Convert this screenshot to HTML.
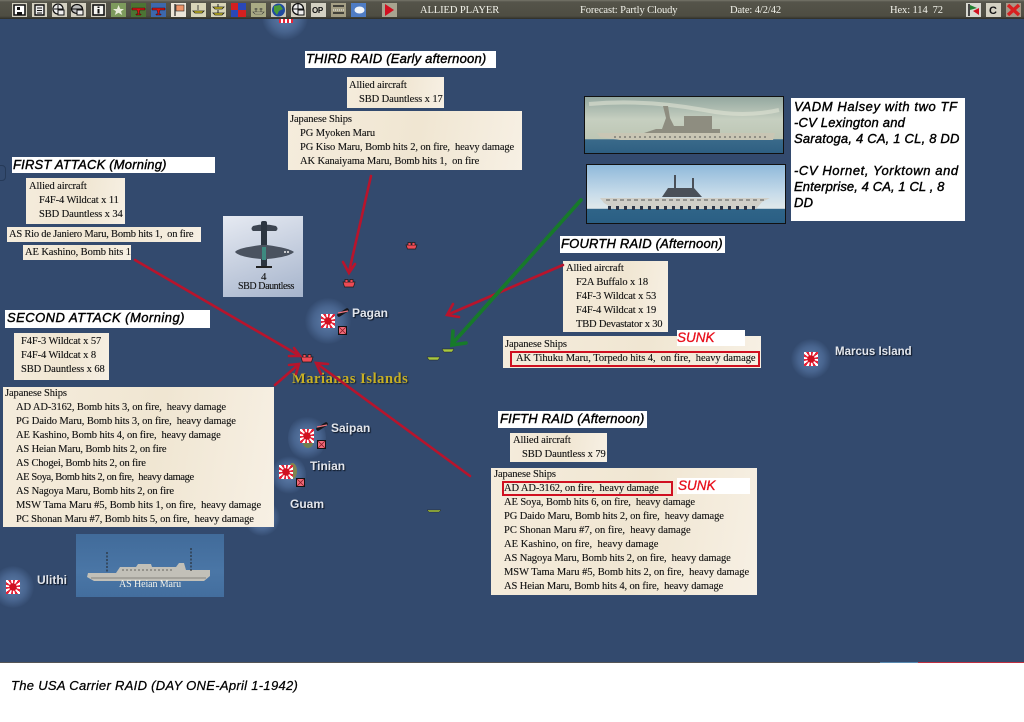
<!DOCTYPE html>
<html><head><meta charset="utf-8"><style>
html,body{margin:0;padding:0;background:#fff}
#r{position:relative;width:1024px;height:722px;overflow:hidden;background:#fff;font-family:"Liberation Serif",serif}
#map{position:absolute;left:0;top:19px;width:1024px;height:643px;background:#334a6e}
#bar{position:absolute;left:0;top:0;width:1024px;height:19px;background:linear-gradient(180deg,#77766a 0,#55544a 2px,#4e4d42 16px,#2e2e28 19px)}
.b{position:absolute;background:#fff}
.p{position:absolute;background:linear-gradient(100deg,#f5ecdc,#f0e6d2 55%,#f7f0e4)}
.t{position:absolute;font:10.5px/12px "Liberation Serif",serif;color:#111;white-space:nowrap;letter-spacing:-.1px;margin-top:1px;-webkit-text-stroke:.12px #111}
.w{color:#f2f2ea;-webkit-text-stroke:0}
.h{position:absolute;font:italic 13px/16px "Liberation Sans",sans-serif;-webkit-text-stroke:.4px #000;color:#000;white-space:nowrap;letter-spacing:.2px}
.l{position:absolute;font:bold 12px/14px "Liberation Sans",sans-serif;color:#e3e6ec;text-shadow:1px 1px 1px #0d1522;white-space:nowrap}
.sun{position:absolute;width:14px;height:14px;background:radial-gradient(circle,#d01020 0 3.5px,transparent 4px),repeating-conic-gradient(#e8243a 0 18deg,#fff 18deg 36deg)}
.g{position:absolute;border-radius:50%;background:radial-gradient(circle,#5f7fac 0,#48648e 45%,rgba(51,74,110,0) 72%)}
.red{position:absolute;border:2px solid #d01020;box-sizing:border-box}
.s{position:absolute;font:italic 13.5px/16px "Liberation Sans",sans-serif;color:#e8101c;white-space:nowrap;-webkit-text-stroke:.3px #e8101c}
</style></head><body><div id="r">
<div id="map"></div>
<div class="g" style="left:262px;top:-6px;width:46px;height:46px"></div>
<div id="bar"></div>
<svg width="1024" height="19" style="position:absolute;left:0;top:0">
<g fill="#d4d1c2"><rect x="12" y="3" width="15" height="14"/><rect x="32" y="3" width="15" height="14"/><rect x="52" y="3" width="15" height="14"/><rect x="71" y="3" width="15" height="14"/><rect x="91" y="3" width="15" height="14"/><rect x="311" y="3" width="15" height="14"/><rect x="291" y="3" width="15" height="14"/></g>
<path d="M14 5H25V15H14Z" fill="#fff" stroke="#111" stroke-width="1.6"/><path d="M17 12H22V15H17Z" fill="#111"/><rect x="17" y="7" width="3" height="3" fill="#111"/>
<path d="M35 5H44V15H35Z" fill="#eee" stroke="#111" stroke-width="1.4"/><path d="M37 8H42M37 10.5H42M37 13H42" stroke="#111"/>
<circle cx="58" cy="9" r="5" fill="#eee" stroke="#111" stroke-width="1.3"/><path d="M54 9H63M58 5V13" stroke="#111"/><rect x="58" y="10" width="6" height="5" fill="#eee" stroke="#111"/>
<ellipse cx="77" cy="9" rx="5.5" ry="4.5" fill="#bbb" stroke="#111" stroke-width="1.3"/><path d="M72 9H83" stroke="#111"/><rect x="77" y="10" width="6" height="5" fill="#eee" stroke="#111"/>
<rect x="93" y="5" width="11" height="10" fill="#f4f4f0" stroke="#111" stroke-width="1.6"/><path d="M98.5 6.5V8M98.5 9V13.5" stroke="#111" stroke-width="2"/>
<rect x="111" y="3" width="15" height="14" fill="#7d9a5c"/><path d="M118.5 5L120.3 9H124L121 11.4L122.2 15L118.5 12.8L114.8 15L116 11.4L113 9H117Z" fill="#e8ecd8"/>
<rect x="131" y="3" width="15" height="14" fill="#4c7434"/><path d="M132 8H145L145 10H140L139 14H141V15H136V14H138L137 10H132Z" fill="#d41414" stroke="#200" stroke-width=".4"/>
<rect x="151" y="3" width="15" height="14" fill="#3d68ac"/><path d="M152 8H165L165 10H160L159 14H161V15H156V14H158L157 10H152Z" fill="#d41414" stroke="#200" stroke-width=".4"/>
<rect x="171" y="3" width="15" height="14" fill="#ece6d8"/><path d="M175 4V16" stroke="#222" stroke-width="1.2"/><rect x="176" y="5" width="8" height="6" fill="#ee9468" stroke="#222" stroke-width=".6"/>
<rect x="191" y="3" width="15" height="14" fill="#d8d5b8"/><path d="M198 5V10M193 11H204L202 13H195Z" fill="#e6d420" stroke="#222" stroke-width=".8"/>
<rect x="211" y="3" width="15" height="14" fill="#d8d5b8"/><path d="M213 7H224L222 9H215ZM213 13H224L222 15H215Z" fill="#e6d420" stroke="#222" stroke-width=".8"/><path d="M218 4V7M218 10V13" stroke="#222"/>
<rect x="231" y="3" width="15" height="14" fill="#2a48b8"/><rect x="231" y="3" width="7" height="7" fill="#d42020"/><rect x="238" y="10" width="8" height="7" fill="#d42020"/>
<rect x="251" y="3" width="15" height="14" fill="#a9aa84"/><path d="M253 12H264L262 14H255Z" fill="#c8c8a0" stroke="#333" stroke-width=".6"/><path d="M256 8V12M261 8V12M254.500 9H257.500M259.500 9H262.500" stroke="#333" stroke-width=".7"/>
<rect x="271" y="3" width="15" height="14" fill="#c8c6b8"/><circle cx="278.500" cy="10" r="6.500" fill="#1f4aa0"/><path d="M274 6L280 5L283 9L279 11L277 15L274 11Z" fill="#4a9a38"/>
<circle cx="298" cy="9" r="5.500" fill="#eee" stroke="#111" stroke-width="1.3"/><path d="M292.500 9H303.500M298 3.500V14.500" stroke="#111"/><rect x="298" y="10" width="6" height="5" fill="#eee" stroke="#111"/>
<rect x="331" y="3" width="15" height="14" fill="#a49e84"/><path d="M333 6H344M333 13H344" stroke="#222" stroke-width="1.6"/><path d="M333 10H344" stroke="#eee" stroke-dasharray="1 1"/>
<rect x="351" y="3" width="15" height="14" fill="#4f7cc4"/><ellipse cx="359.500" cy="10" rx="5" ry="3.500" fill="#f0f4fa"/>
<rect x="382" y="3" width="15" height="14" fill="#a8a490"/><path d="M385 4L394 10L385 16Z" fill="#d01020"/>
<rect x="966" y="3" width="15" height="14" fill="#d8d8d0"/><path d="M969 4V16" stroke="#222" stroke-width="1.6"/><path d="M970 5L977 8L970 10Z" fill="#208030"/><path d="M979 8L973 11L979 15Z" fill="#d01020"/>
<rect x="986" y="3" width="15" height="14" fill="#d4d1c2"/>
<rect x="1006" y="3" width="15" height="14" fill="#a89888"/><path d="M1008 5L1019 15M1019 5L1008 15" stroke="#d82020" stroke-width="3.400"/>
</svg>
<div class="t" style="left:312px;top:3px;font:bold 8px/14px 'Liberation Sans',sans-serif;-webkit-text-stroke:0;letter-spacing:-.4px">OP</div>
<div class="t" style="left:989px;top:3px;font:bold 11px/14px 'Liberation Sans',sans-serif;-webkit-text-stroke:0">C</div>
<div class="t w" style="left:420px;top:4px">ALLIED PLAYER</div>
<div class="t w" style="left:580px;top:4px">Forecast: Partly Cloudy</div>
<div class="t w" style="left:730px;top:4px">Date: 4/2/42</div>
<div class="t w" style="left:890px;top:4px">Hex: 114&nbsp; 72</div>

<!-- glows and islands -->
<div class="g" style="left:305px;top:298px;width:46px;height:46px"></div>
<div class="g" style="left:288px;top:415px;width:38px;height:46px"></div>
<div class="g" style="left:272px;top:455px;width:34px;height:40px"></div>
<div class="g" style="left:244px;top:500px;width:36px;height:36px"></div>
<div class="g" style="left:791px;top:339px;width:40px;height:40px"></div>
<div class="g" style="left:-8px;top:566px;width:42px;height:42px"></div>
<div style="position:absolute;left:-6px;top:165px;width:10px;height:14px;border:1px solid #263a58;border-radius:4px"></div>
<div style="position:absolute;left:303px;top:438px;width:10px;height:10px;border-radius:50%;background:#6f7f50"></div>
<div style="position:absolute;left:288px;top:463px;width:9px;height:16px;border-radius:50%;background:#7f8350"></div>
<div style="position:absolute;left:279px;top:19px;width:14px;height:4px;background:repeating-linear-gradient(90deg,#e8243a 0 2px,#fff 2px 4px)"></div>
<div class="sun" style="left:321px;top:314px"></div>
<div class="sun" style="left:300px;top:429px"></div>
<div class="sun" style="left:279px;top:465px"></div>
<div class="sun" style="left:804px;top:352px"></div>
<div class="sun" style="left:6px;top:580px"></div>
<svg width="1024" height="722" style="position:absolute;left:0;top:0">
<g id="xb" fill="#ee6b78" stroke="#111" stroke-width="1">
<rect x="338.500" y="326.500" width="8" height="8"/><rect x="317.500" y="440.500" width="8" height="8"/><rect x="296.500" y="478.500" width="8" height="8"/>
</g>
<path d="M339 327L346 334M346 327L339 334M318 441L325 448M325 441L318 448M297 479L304 486M304 479L297 486" stroke="#8a1a26" stroke-width=".8"/>
<g fill="#ee4a55" stroke="#1a1a1a" stroke-width=".7">
<path d="M406 245H417L415.500 249H407.500Z"/><path d="M343 282H355L353.500 287H344.500Z"/><path d="M301 357H313L311.500 362H302.500Z"/>
<path d="M408 245V242.500H411V245M412 245V242.500H415V245M345 282V279.500H348V282M350 282V279.500H353V282M303 357V354.500H306V357M308 357V354.500H311V357"/>
</g>
<g stroke="#16161a" stroke-width="3.600" stroke-linecap="round"><path d="M339 315L347 310M318 429L326 424"/></g>
<g stroke="#ee7580" stroke-width="1.200"><path d="M338 313L348 311M317 427L327 425"/></g>
<g fill="#a8c840" stroke="#222" stroke-width=".5">
<path d="M442 349H454L452 352H444Z"/><path d="M427 357H440L438 360H429Z"/><path d="M427 510H441L439 512H429Z"/>
</g>
</svg>

<div class="l" style="left:352px;top:306px">Pagan</div>
<div class="l" style="left:331px;top:421px">Saipan</div>
<div class="l" style="left:310px;top:459px">Tinian</div>
<div class="l" style="left:290px;top:497px">Guam</div>
<div class="l" style="left:835px;top:345px;font-size:11.5px">Marcus Island</div>
<div class="l" style="left:37px;top:573px">Ulithi</div>
<div style="position:absolute;left:292px;top:371px;font:bold 14.500px/16px 'Liberation Serif',serif;color:#c8b024;text-shadow:1px 1px 1px #14202f;white-space:nowrap;letter-spacing:.55px">Marianas Islands</div>

<!-- THIRD -->
<div class="b" style="left:305px;top:51px;width:191px;height:17px"></div>
<div class="h" style="left:306px;top:51px">THIRD RAID (Early afternoon)</div>
<div class="p" style="left:347px;top:77px;width:97px;height:31px"></div>
<div class="t" style="left:349px;top:79px">Allied aircraft</div>
<div class="t" style="left:359px;top:93px">SBD Dauntless x 17</div>
<div class="p" style="left:288px;top:111px;width:234px;height:59px"></div>
<div class="t" style="left:290px;top:113px">Japanese Ships</div>
<div class="t" style="left:300px;top:127px">PG Myoken Maru</div>
<div class="t" style="left:300px;top:141px">PG Kiso Maru, Bomb hits 2, on fire, &nbsp;heavy damage</div>
<div class="t" style="left:300px;top:155px">AK Kanaiyama Maru, Bomb hits 1, &nbsp;on fire</div>

<!-- FIRST -->
<div class="b" style="left:12px;top:157px;width:203px;height:16px"></div>
<div class="h" style="left:13px;top:157px">FIRST ATTACK (Morning)</div>
<div class="p" style="left:26px;top:178px;width:99px;height:46px"></div>
<div class="t" style="left:29px;top:180px">Allied aircraft</div>
<div class="t" style="left:39px;top:194px">F4F-4 Wildcat x 11</div>
<div class="t" style="left:39px;top:208px">SBD Dauntless x 34</div>
<div class="p" style="left:7px;top:227px;width:194px;height:15px"></div>
<div class="t" style="left:9px;top:228px;letter-spacing:-.22px">AS Rio de Janiero Maru, Bomb hits 1, &nbsp;on fire</div>
<div class="p" style="left:23px;top:245px;width:108px;height:15px"></div>
<div class="t" style="left:25px;top:246px">AE Kashino, Bomb hits 1</div>

<!-- plane -->
<div style="position:absolute;left:223px;top:216px;width:80px;height:81px;background:linear-gradient(160deg,#e6eaf2,#a6b4cc)"></div>
<svg width="80" height="60" style="position:absolute;left:223px;top:216px">
<path d="M30 10Q41 7 53 10Q56 13 53 15H30Q27 13 30 10Z" fill="#3c4450"/>
<rect x="38" y="5" width="6" height="46" rx="2" fill="#2c3540"/>
<path d="M12 36Q14 32 38 29H44Q66 32 71 36Q66 41 44 43H38Q16 41 12 36Z" fill="#4a525f"/>
<rect x="39" y="31" width="4" height="13" fill="#3e8a80"/><path d="M33 51H49" stroke="#222" stroke-width="2"/>
<circle cx="62" cy="36" r="1" fill="#eee"/><circle cx="65" cy="36" r="1" fill="#eee"/>
</svg>
<div class="t" style="left:261px;top:270px;font-size:11px">4</div>
<div class="t" style="left:238px;top:280px;font-size:10px;letter-spacing:-.42px">SBD Dauntless</div>

<!-- SECOND -->
<div class="b" style="left:5px;top:310px;width:205px;height:18px"></div>
<div class="h" style="left:7px;top:310px;letter-spacing:.46px">SECOND ATTACK (Morning)</div>
<div class="p" style="left:14px;top:333px;width:95px;height:47px"></div>
<div class="t" style="left:21px;top:335px">F4F-3 Wildcat x 57</div>
<div class="t" style="left:21px;top:349px">F4F-4 Wildcat x 8</div>
<div class="t" style="left:21px;top:363px">SBD Dauntless x 68</div>
<div class="p" style="left:3px;top:387px;width:271px;height:140px"></div>
<div class="t" style="left:5px;top:387px">Japanese Ships</div>
<div class="t" style="left:16px;top:401px">AD AD-3162, Bomb hits 3, on fire, &nbsp;heavy damage</div>
<div class="t" style="left:16px;top:415px">PG Daido Maru, Bomb hits 3, on fire, &nbsp;heavy damage</div>
<div class="t" style="left:16px;top:429px">AE Kashino, Bomb hits 4, on fire, &nbsp;heavy damage</div>
<div class="t" style="left:16px;top:443px;letter-spacing:-.16px">AS Heian Maru, Bomb hits 2, on fire</div>
<div class="t" style="left:16px;top:457px;letter-spacing:-.2px">AS Chogei, Bomb hits 2, on fire</div>
<div class="t" style="left:16px;top:471px;letter-spacing:-.4px">AE Soya, Bomb hits 2, on fire, &nbsp;heavy damage</div>
<div class="t" style="left:16px;top:485px;letter-spacing:-.16px">AS Nagoya Maru, Bomb hits 2, on fire</div>
<div class="t" style="left:16px;top:499px;letter-spacing:-.03px">MSW Tama Maru #5, Bomb hits 1, on fire, &nbsp;heavy damage</div>
<div class="t" style="left:16px;top:513px">PC Shonan Maru #7, Bomb hits 5, on fire, &nbsp;heavy damage</div>

<!-- Heian -->
<div style="position:absolute;left:76px;top:534px;width:148px;height:63px;background:linear-gradient(180deg,#416b9a,#4a76a6 60%,#436e9e)"></div>
<svg width="148" height="63" style="position:absolute;left:76px;top:534px">
<path d="M11 43L12 39H40L44 33H60L62 30H75L76 33H100L103 29H108L110 36H125L134 36V42L128 47H18Z" fill="#c2c0b8"/>
<path d="M15 44H130" stroke="#87857e"/><path d="M46 36H98" stroke="#66645e" stroke-dasharray="2 2"/>
<path d="M31 18V38M115 14V38" stroke="#222" stroke-width="1" stroke-dasharray="2 1.500"/>
</svg>
<div class="t w" style="left:119px;top:578px;font-size:10px">AS Heian Maru</div>

<!-- carriers -->
<div style="position:absolute;left:584px;top:96px;width:200px;height:58px;background:linear-gradient(180deg,#94a8a0 0,#c6cfc0 40%,#bdc6b4 75%,#3a6a8a 76%,#2e5f82);border:1px solid #111;box-sizing:border-box"></div>
<svg width="200" height="58" style="position:absolute;left:584px;top:96px">
<path d="M5 8Q60 3 120 14Q160 22 195 14" stroke="#dfe3d4" stroke-width="4" fill="none" opacity=".6"/>
<path d="M13 37H191L189 44H36L16 41Z" fill="#c9c6b4"/>
<path d="M60 37L72 33H78L82 22L79 10H84L86 22L90 30H100V20H128V33H136V37Z" fill="#8e8d80"/>
<path d="M30 41H185" stroke="#555" stroke-dasharray="2 3"/>
</svg>
<div style="position:absolute;left:586px;top:164px;width:200px;height:60px;background:linear-gradient(180deg,#8fb9da 0,#c8dcea 50%,#e0e8ea 75%,#2f6488 76%,#2a5f84);border:1px solid #111;box-sizing:border-box"></div>
<svg width="200" height="60" style="position:absolute;left:586px;top:164px">
<path d="M14 34H184L176 38L170 45H28L18 39Z" fill="#d0cfc8"/>
<path d="M76 33L82 24H88V11H90V24H106V14H108V24L116 33Z" fill="#4a5058"/>
<path d="M22 44H170" stroke="#2c3648" stroke-width="4" stroke-dasharray="3 5"/><path d="M20 36H178" stroke="#555" stroke-dasharray="4 3"/>
</svg>
<div class="b" style="left:791px;top:98px;width:174px;height:123px"></div>
<div class="h" style="left:794px;top:99px"><span style="letter-spacing:.58px">VADM Halsey with two TF</span><br>-CV Lexington and<br>Saratoga, 4 CA, 1 CL, 8 DD<br><br><span style="letter-spacing:.58px">-CV Hornet, Yorktown and</span><br><span style="letter-spacing:.1px">Enterprise, 4 CA, 1 CL , 8</span><br>DD</div>

<!-- FOURTH -->
<div class="b" style="left:560px;top:236px;width:165px;height:17px"></div>
<div class="h" style="left:561px;top:236px">FOURTH RAID (Afternoon)</div>
<div class="p" style="left:563px;top:261px;width:105px;height:71px"></div>
<div class="t" style="left:566px;top:262px">Allied aircraft</div>
<div class="t" style="left:576px;top:276px">F2A Buffalo x 18</div>
<div class="t" style="left:576px;top:290px">F4F-3 Wildcat x 53</div>
<div class="t" style="left:576px;top:304px">F4F-4 Wildcat x 19</div>
<div class="t" style="left:576px;top:318px;letter-spacing:-.2px">TBD Devastator x 30</div>
<div class="p" style="left:503px;top:336px;width:258px;height:32px"></div>
<div class="b" style="left:677px;top:330px;width:68px;height:16px"></div>
<div class="s" style="left:677px;top:330px">SUNK</div>
<div class="t" style="left:505px;top:338px">Japanese Ships</div>
<div class="red" style="left:510px;top:351px;width:250px;height:16px"></div>
<div class="t" style="left:516px;top:352px;letter-spacing:-.05px">AK Tihuku Maru, Torpedo hits 4, &nbsp;on fire, &nbsp;heavy damage</div>

<!-- FIFTH -->
<div class="b" style="left:498px;top:411px;width:149px;height:17px"></div>
<div class="h" style="left:500px;top:411px">FIFTH RAID (Afternoon)</div>
<div class="p" style="left:510px;top:433px;width:97px;height:29px"></div>
<div class="t" style="left:513px;top:434px">Allied aircraft</div>
<div class="t" style="left:522px;top:448px">SBD Dauntless x 79</div>
<div class="p" style="left:491px;top:468px;width:266px;height:127px"></div>
<div class="t" style="left:494px;top:468px">Japanese Ships</div>
<div class="b" style="left:677px;top:478px;width:73px;height:16px"></div>
<div class="s" style="left:678px;top:478px">SUNK</div>
<div class="red" style="left:502px;top:481px;width:171px;height:15px"></div>
<div class="t" style="left:504px;top:482px">AD AD-3162, on fire, &nbsp;heavy damage</div>
<div class="t" style="left:504px;top:496px">AE Soya, Bomb hits 6, on fire, &nbsp;heavy damage</div>
<div class="t" style="left:504px;top:510px">PG Daido Maru, Bomb hits 2, on fire, &nbsp;heavy damage</div>
<div class="t" style="left:504px;top:524px;letter-spacing:0">PC Shonan Maru #7, on fire, &nbsp;heavy damage</div>
<div class="t" style="left:504px;top:538px;letter-spacing:.05px">AE Kashino, on fire, &nbsp;heavy damage</div>
<div class="t" style="left:504px;top:552px">AS Nagoya Maru, Bomb hits 2, on fire, &nbsp;heavy damage</div>
<div class="t" style="left:504px;top:566px;letter-spacing:-.03px">MSW Tama Maru #5, Bomb hits 2, on fire, &nbsp;heavy damage</div>
<div class="t" style="left:504px;top:580px">AS Heian Maru, Bomb hits 4, on fire, &nbsp;heavy damage</div>

<!-- arrows -->
<svg width="1024" height="722" style="position:absolute;left:0;top:0" fill="none" stroke-linecap="round">
<g stroke="#b8142c" stroke-width="2.600">
<path d="M371 176L349 272M343 262L349 273L355 264"/>
<path d="M135 260L300 356M289 356L300 356L294 348"/>
<path d="M275 385L299 364M289 365L299 364L296 374"/>
<path d="M470 476L316 363M328 364L316 363L321 374"/>
<path d="M563 265L447 315M453 304L447 315L459 317"/>
</g>
<g stroke="#177a2a" stroke-width="3.600">
<path d="M581 200L452 344M453 331L452 345L466 343"/>
</g>
</svg>

<!-- footer -->
<div style="position:absolute;left:0;top:662px;width:1024px;height:1px;background:#555"></div>
<div style="position:absolute;left:880px;top:662px;width:38px;height:1px;background:#5a8ab0"></div>
<div style="position:absolute;left:918px;top:662px;width:106px;height:1px;background:#c03040"></div>
<div class="h" style="left:11px;top:678px;-webkit-text-stroke:.25px #000;letter-spacing:.3px">The USA Carrier RAID (DAY ONE-April 1-1942)</div>
</div></body></html>
